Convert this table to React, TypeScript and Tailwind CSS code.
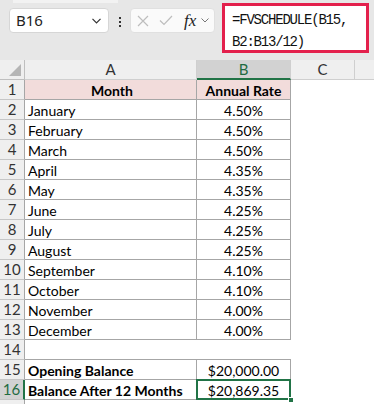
import React from "react";

const rows: [string, string, boolean][] = [
  ["Month", "Annual Rate", true],
  ["January", "4.50%", false],
  ["February", "4.50%", false],
  ["March", "4.50%", false],
  ["April", "4.35%", false],
  ["May", "4.35%", false],
  ["June", "4.25%", false],
  ["July", "4.25%", false],
  ["August", "4.25%", false],
  ["September", "4.10%", false],
  ["October", "4.10%", false],
  ["November", "4.00%", false],
  ["December", "4.00%", false],
  ["", "", false],
  ["Opening Balance", "$20,000.00", true],
  ["Balance After 12 Months", "$20,869.35", true],
];

const cellFont = { fontFamily: "Lato, 'Liberation Sans', sans-serif" };

export default function App() {
  return (
    <div className="w-[374px] h-[404px] overflow-hidden bg-white relative" style={cellFont}>
      {/* toolbar */}
      <div className="h-[60px] bg-[#e7e7e7] relative flex items-start">
        <div className="absolute left-[13px] top-0 w-[105px] h-[3px] bg-[#f2f2f2]" />
        <div className="mt-[8px] ml-[9px] w-[100px] h-[25px] bg-white border border-[#d6d6d6] rounded-[4px] flex items-center justify-between pl-[6px] pr-[7px]">
          <span className="text-[15px] text-[#222]" style={{ fontFamily: "'Noto Sans', sans-serif" }}>B16</span>
          <svg width="9" height="6" viewBox="0 0 9 6"><path d="M0.5 0.8 L4.5 4.8 L8.5 0.8" fill="none" stroke="#333" strokeWidth="1.2" /></svg>
        </div>
        <div className="mt-[17px] ml-[9px] w-[3px] flex flex-col gap-[2px] items-center">
          <div className="w-[2px] h-[2px] bg-[#333]" />
          <div className="w-[2px] h-[2px] bg-[#333]" />
          <div className="w-[2px] h-[2px] bg-[#333]" />
        </div>
        <div className="mt-[8px] ml-[9px] w-[85px] h-[25px] bg-[#fafafa] border border-[#e0e0e0] rounded-[4px] flex items-center pl-[6px]">
          <svg width="12" height="12" viewBox="0 0 12 12"><path d="M1 1 L11 11 M11 1 L1 11" stroke="#bdbdbd" strokeWidth="1.2" /></svg>
          <svg className="ml-[10px]" width="14" height="11" viewBox="0 0 14 11"><path d="M1 5.5 L5 9.5 L13 1" fill="none" stroke="#bdbdbd" strokeWidth="1.2" /></svg>
          <span className="ml-[11px] text-[17px] italic text-[#222] leading-none" style={{ fontFamily: "'Liberation Serif', serif" }}>fx</span>
          <svg className="ml-[5px]" width="8" height="5" viewBox="0 0 8 5"><path d="M0.5 0.5 L4 4 L7.5 0.5" fill="none" stroke="#777" strokeWidth="1" /></svg>
        </div>
        <div className="mt-[3px] ml-[7px] w-[147px] h-[50px] bg-white border-[3px] border-[#e3204c] pl-[7px] pt-[3px] text-[14px] leading-[22px] text-[#111] tracking-[-1.2px]" style={{ fontFamily: "'Liberation Mono', monospace" }}>
          <div>=FVSCHEDULE(B15,</div>
          <div>B2:B13/12)</div>
        </div>
      </div>

      {/* column headers */}
      <div className="flex h-[20px] bg-[#efefef] text-[15px] text-[#333]">
        <div className="w-[25px] h-full border-r border-b border-[#bfbfbf] relative box-border">
          <svg className="absolute right-[3px] bottom-[3px]" width="12" height="12" viewBox="0 0 12 12"><path d="M12 0 L12 12 L0 12 Z" fill="#b5b5b5" /></svg>
        </div>
        <div className="w-[172px] h-full border-r border-b border-[#cfcfcf] box-border flex items-center justify-center">A</div>
        <div className="w-[94px] h-full bg-[#d2d2d2] border-r border-[#cfcfcf] border-b-2 border-b-[#217346] box-border flex items-center justify-center text-[#1f6b41]">B</div>
        <div className="w-[64px] h-full border-r border-b border-[#cfcfcf] box-border flex items-center justify-center">C</div>
        <div className="flex-1 h-full border-b border-[#cfcfcf] box-border" />
      </div>

      {rows.map(([a, b, bold], i) => {
        const r = i + 1;
        const isEmpty = r === 14;
        const selected = r === 16;
        const bc = "border-[#a6a6a6]";
        return (
          <div key={r} className="flex h-[20px] text-[14px] text-black">
            <div
              className={
                "w-[25px] h-full box-border border-b flex items-center justify-center text-[15px] " +
                (selected
                  ? "bg-[#d2d2d2] text-[#1f6b41] border-r-2 border-r-[#217346] border-b-[#c6c6c6]"
                  : "bg-[#efefef] text-[#333] border-r border-r-[#a6a6a6] border-b-[#c6c6c6]")
              }
            >
              {r}
            </div>
            <div
              className={
                "w-[172px] h-full box-border border-b flex items-center pl-[3px] pt-[1px] " + bc + " " +
                (isEmpty ? "" : "border-r ") +
                (r === 1 ? "bg-[#f2dcdb] justify-center " : "") +
                (bold ? "font-bold" : "")
              }
            >
              {a}
            </div>
            <div
              className={
                "w-[94px] h-full box-border border-b flex items-center justify-center pt-[1px] relative " + bc + " " +
                (isEmpty ? "" : "border-r ") +
                (r === 1 ? "bg-[#f2dcdb] font-bold" : "")
              }
            >
              {b}
              {selected && (
                <>
                  <div className="absolute left-[-1px] top-[-1px] right-[-1px] bottom-[-1px] border-2 border-[#217346]" />
                  <div className="absolute right-[-4px] bottom-[-4px] w-[6px] h-[6px] bg-[#217346] border border-white" />
                </>
              )}
            </div>
            <div className="w-[64px] h-full" />
            <div className="flex-1 h-full" />
          </div>
        );
      })}
      <div className="flex h-[10px]">
        <div className="w-[25px] h-full bg-[#efefef] border-r border-[#a6a6a6] box-border" />
      </div>
    </div>
  );
}
